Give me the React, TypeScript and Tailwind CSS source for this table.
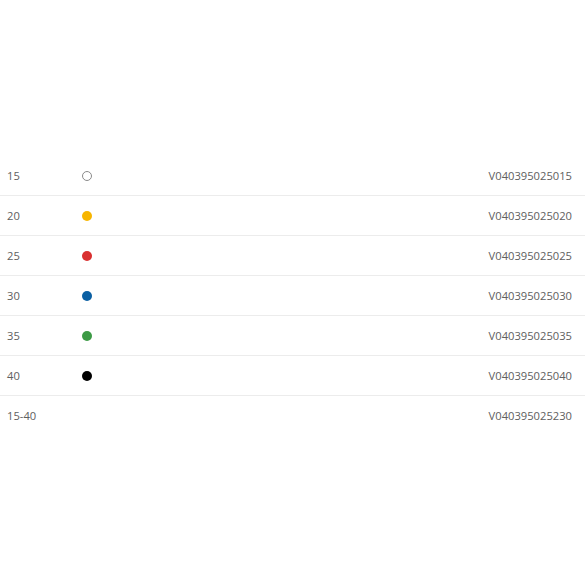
const ROWS = [
  { size: "15", dot: "border border-[#8a8a8a] bg-white", code: "V040395025015" },
  { size: "20", dot: "bg-[#f7b500]", code: "V040395025020" },
  { size: "25", dot: "bg-[#d93030]", code: "V040395025025" },
  { size: "30", dot: "bg-[#0a5fa3]", code: "V040395025030" },
  { size: "35", dot: "bg-[#3c9a45]", code: "V040395025035" },
  { size: "40", dot: "bg-black", code: "V040395025040" },
  { size: "15-40", dot: "", code: "V040395025230" },
];

export default function App() {
  return (
    <div className="w-[585px] h-[585px] bg-white pt-[156px] font-['Open_Sans',sans-serif] text-[11.2px] text-[#606060]">
      {ROWS.map((row, i) => (
        <div
          key={row.code}
          className={`flex items-center h-10 pl-[7px] pr-[13px] ${i < ROWS.length - 1 ? "border-b border-[#ececec]" : ""}`}
        >
          <span className="w-[75px] pt-px">{row.size}</span>
          <span className="w-[10px] h-[10px] flex items-center justify-center">
            {row.dot && <span className={`block w-[10px] h-[10px] rounded-full ${row.dot}`} />}
          </span>
          <span className="ml-auto pt-px">{row.code}</span>
        </div>
      ))}
    </div>
  );
}
